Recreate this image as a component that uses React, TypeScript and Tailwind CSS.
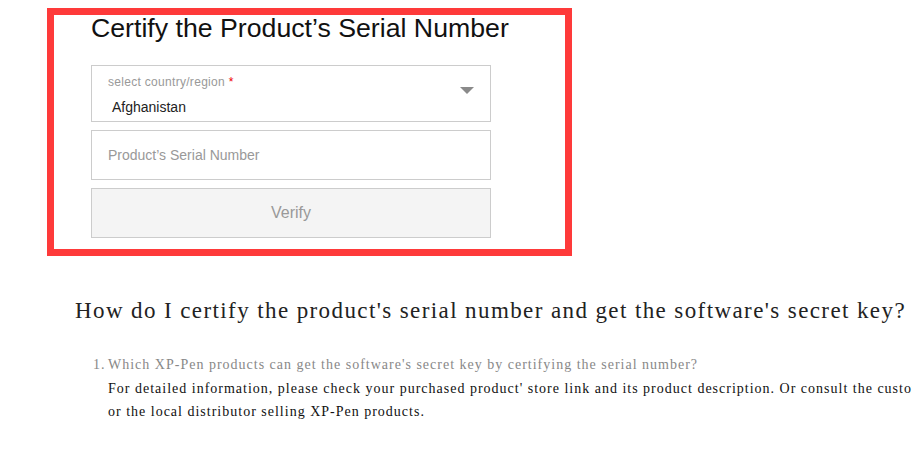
import React from "react";

export default function App() {
  return (
    <div className="w-[912px] h-[455px] overflow-hidden bg-white relative">
      <div className="ml-[47px] mt-[8px] w-[525px] h-[248px] border-[7px] border-[#fe3a3a] pl-[37px] font-['Liberation_Sans',Arial,sans-serif]">
        <h1 className="text-[26.7px] leading-[26px] text-[#111] whitespace-nowrap">
          Certify the Product’s Serial Number
        </h1>
        <div className="relative mt-[24px] w-[400px] h-[57px] border border-[#cccccc] bg-white">
          <div className="absolute left-[16px] top-[9px] text-[12px] leading-[14px] text-[#999] tracking-[0.3px] whitespace-nowrap">
            select country/region <span className="text-[#e00]">*</span>
          </div>
          <div className="absolute left-[20px] top-[33px] text-[14px] leading-[16px] text-[#222]">
            Afghanistan
          </div>
          <div className="absolute right-[16px] top-[21px] w-0 h-0 border-l-[7px] border-r-[7px] border-t-[7px] border-l-transparent border-r-transparent border-t-[#8a8a8a]" />
        </div>
        <div className="mt-[8px] w-[400px] h-[50px] border border-[#cccccc] flex items-center pl-[16px] text-[14px] text-[#999]">
          Product’s Serial Number
        </div>
        <div className="mt-[8px] w-[400px] h-[50px] border border-[#cccccc] bg-[#f4f4f4] flex items-center justify-center text-[16px] text-[#999]">
          Verify
        </div>
      </div>
      <div className="font-['Liberation_Serif','Times_New_Roman',serif] whitespace-nowrap">
        <h2 className="ml-[75px] mt-[40px] text-[23px] leading-[30px] text-[#222] tracking-[1.4px]">
          How do I certify the product's serial number and get the software's secret key?
        </h2>
        <ol className="mt-[27px] ml-[93px] text-[14px] leading-[23.5px] tracking-[1px]">
          <li className="flex">
            <span className="w-[15px] shrink-0 text-[#888]">1.</span>
            <div>
              <div className="text-[#888]">Which XP-Pen products can get the software's secret key by certifying the serial number?</div>
              <div className="text-[#111]">For detailed information, please check your purchased product' store link and its product description. Or consult the customer service</div>
              <div className="text-[#111]">or the local distributor selling XP-Pen products.</div>
            </div>
          </li>
        </ol>
      </div>
    </div>
  );
}
